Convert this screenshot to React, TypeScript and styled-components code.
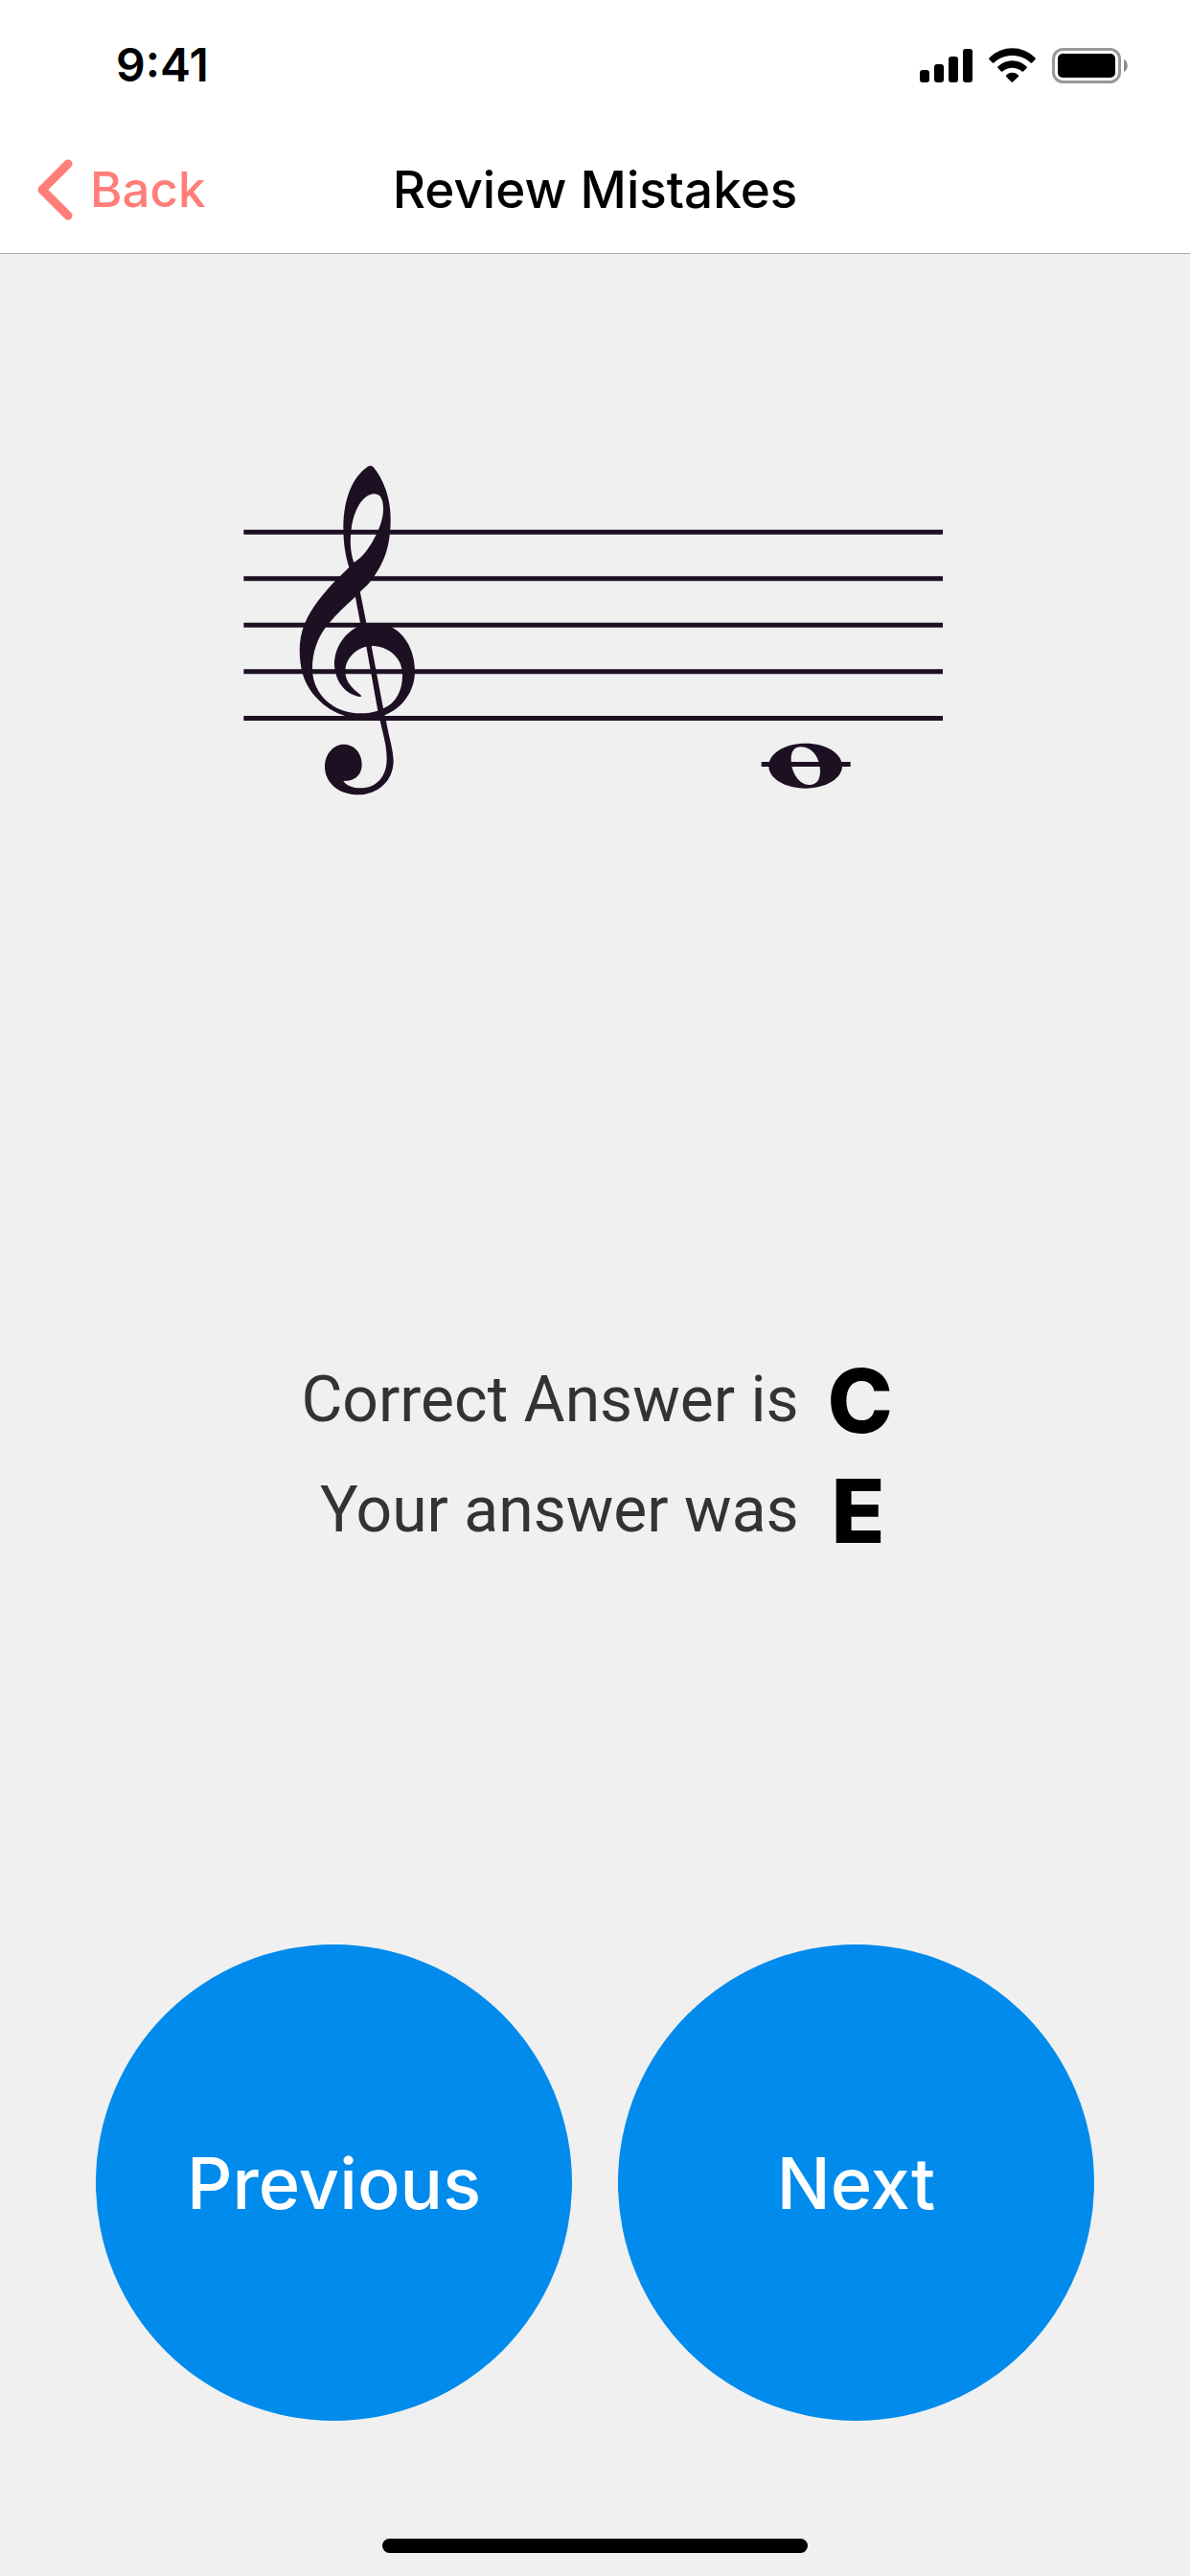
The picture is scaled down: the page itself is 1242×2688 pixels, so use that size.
import React from "react";
import styled, { createGlobalStyle } from "styled-components";

const GlobalStyle = createGlobalStyle`
  *, *::before, *::after { box-sizing: border-box; }
  body {
    margin: 0;
    background: #f0f0f0;
    color: #000;
    font-family: Inter, "Liberation Sans", sans-serif;
  }
`;

const Screen = styled.div`
  display: flex;
  flex-direction: column;
  min-height: 100vh;
`;

const Header = styled.header`
  background: #fff;
  border-bottom: 1px solid #a8a8a8;
`;

const StatusBar = styled.div`
  display: flex;
  align-items: center;
  justify-content: space-between;
  height: 132px;
  padding: 4px 64px 0 121px;
`;

const Clock = styled.time`
  font-size: 48px;
  font-weight: 600;
  line-height: 60px;
`;

const StatusIcons = styled.div`
  display: flex;
  align-items: center;
  gap: 17px;
`;

const NavBar = styled.nav`
  display: grid;
  grid-template-columns: 1fr auto 1fr;
  align-items: center;
  height: 132px;
  padding: 0 36px;
`;

const BackButton = styled.button`
  display: flex;
  align-items: center;
  gap: 16px;
  justify-self: start;
  padding: 0;
  border: 0;
  background: none;
  color: #ff7e79;
  font: inherit;
  font-size: 51px;
  font-weight: 500;
  line-height: 60px;
  cursor: pointer;
`;

const Title = styled.h1`
  margin: 0;
  font-size: 53px;
  font-weight: 500;
  line-height: 60px;
`;

const Content = styled.main`
  display: flex;
  flex: 1;
  flex-direction: column;
  align-items: center;
  padding-top: 221px;
`;

const Staff = styled.svg`
  display: block;
  width: 734px;
  max-width: 90%;
  height: auto;
  color: #1d1023;
`;

const Answers = styled.dl`
  display: grid;
  flex: 1;
  grid-template-columns: auto 64px;
  grid-auto-rows: 115px;
  align-content: center;
  align-items: center;
  column-gap: 30px;
  margin: 0;
  padding-top: 178px;
`;

const AnswerLabel = styled.dt`
  color: #333;
  font-family: Roboto, "Liberation Sans", sans-serif;
  font-size: 66px;
  line-height: 80px;
  text-align: right;
`;

const AnswerNote = styled.dd`
  margin: 0;
  font-size: 92px;
  font-weight: 800;
  line-height: 115px;
  text-align: center;
`;

const Controls = styled.div`
  display: grid;
  grid-template-columns: 1fr 1fr;
  gap: 48px;
  width: 100%;
  padding: 0 100px;
`;

const RoundButton = styled.button`
  aspect-ratio: 1;
  padding: 0;
  border: 0;
  border-radius: 50%;
  background: #018bec;
  color: #fff;
  font: inherit;
  font-size: 74px;
  font-weight: 500;
  line-height: 84px;
  cursor: pointer;
`;

const Footer = styled.footer`
  display: flex;
  align-items: flex-end;
  justify-content: center;
  height: 162px;
  padding-bottom: 24px;
`;

const HomeIndicator = styled.div`
  width: 444px;
  height: 15px;
  border-radius: 8px;
  background: #000;
`;

const SignalIcon = () => (
  <svg width="55" height="37" viewBox="0 0 55 37" aria-hidden="true">
    <rect x="0" y="23" width="10" height="13" rx="3" />
    <rect x="15" y="17" width="10" height="19" rx="3" />
    <rect x="30" y="9" width="10" height="27" rx="3" />
    <rect x="45" y="1" width="10" height="35" rx="3" />
  </svg>
);

const WifiIcon = () => (
  <svg width="49" height="37" viewBox="0 0 147 111" aria-hidden="true">
    <path d="M2 31 C42 -9 105 -9 145 31 Q148 34 145 37 L136 46 Q133 49 130 46 C98 17 49 17 17 46 Q14 49 11 46 L2 37 Q-1 34 2 31Z" />
    <path d="M29 58 C54 34 93 34 118 58 Q121 61 118 64 L109 73 Q106 76 103 73 C86 59 61 59 44 73 Q41 76 38 73 L29 64 Q26 61 29 58Z" />
    <path d="M55 85 C66 75 81 75 92 85 Q95 88 92 91 L76 106 Q73 109 70 106 L55 91 Q52 88 55 85Z" />
  </svg>
);

const BatteryIcon = () => (
  <svg width="80" height="37" viewBox="0 0 80 37" aria-hidden="true">
    <rect x="1.5" y="1.5" width="69" height="34" rx="10" fill="none" stroke="#999" strokeWidth="3" />
    <rect x="6" y="6" width="60" height="25" rx="5" />
    <path d="M75 12 C80 14 80 23 75 25Z" fill="#8c8c8c" />
  </svg>
);

const ChevronIcon = () => (
  <svg width="42" height="66" viewBox="0 0 42 66" aria-hidden="true">
    <path
      d="M35 6 L8 33 L35 60"
      fill="none"
      stroke="currentColor"
      strokeWidth="9"
      strokeLinecap="round"
      strokeLinejoin="round"
    />
  </svg>
);

const STAFF_LINES = [256, 401.5, 547, 692.5, 838.5];

const StaffDrawing = () => (
  <Staff viewBox="42 48 2202 1032" role="img" aria-label="Treble staff with a whole note on middle C">
    <g stroke="currentColor" strokeWidth="15">
      {STAFF_LINES.map((y) => (
        <line key={y} x1="43" x2="2232" y1={y} y2={y} />
      ))}
      <line x1="1664" x2="1943" y1="982.5" y2="982.5" />
    </g>
    <g fill="currentColor" fillRule="evenodd">
      {/* upper loop and the sweep down to the left */}
      <path
        d="M432 50 Q440 46 448 51 C480 88 504 150 503 220 C502 300 485 345 450 397 C438 415 423 429 407 443 L427 540
           L400 552 L427 540 L407 443 L392 459 C362 486 333 513 311 540 L299 555 C274 588 257 635 258 686
           C260 765 325 823 410 823 C430 823 447 820 463 815 C468 813 475 811 480 808
           C517 793 540 755 540 705 L538 684 C532 643 490 612 443 612 L427 614 C390 622 361 655 361 692
           C361 725 385 746 411 767 Q414 771 406 771 C362 765 328 722 327 670 C327 620 356 574 400 552
           C420 541 485 541 505 553 C550 575 579 630 579 690 C579 755 540 806 486 828 C462 837 437 838 410 838
           C395 838 375 837 360 831 C295 811 240 755 225 690 C215 640 214 590 235 540
           C257 490 292 448 330 408 L373 366 C362 330 355 295 355 240 C355 160 380 85 432 50Z
           M452 136 C415 137 387 188 380 248 C375 285 377 320 388 351 C418 333 440 300 458 263
           C470 238 480 212 480 182 C480 157 474 137 452 136Z"
      />
      {/* stem and the bulb at its foot */}
      <path
        d="M390 445 L407 440 L427 540 L443 612 L480 808 L489 846 C497 895 511 935 512 972
           C512 1035 462 1078 402 1078 C340 1078 297 1040 297 990 C297 950 325 920 356 920
           C390 920 413 948 413 983 C413 1015 392 1035 355 1035 C365 1050 385 1057 408 1057
           C460 1057 491 1020 491 965 C491 925 479 888 470 846 L463 815 L427 614 L408 540Z"
      />
      {/* whole note */}
      <path
        d="M1802 917 C1866 917 1917 948 1917 988 C1917 1027 1866 1058 1802 1058 C1738 1058 1687 1027 1687 988
           C1687 948 1738 917 1802 917Z
           M1788 928 C1768 928 1757 941 1757 966 C1757 1010 1783 1047 1814 1047
           C1837 1047 1848 1032 1848 1003 C1848 962 1822 928 1788 928Z"
      />
    </g>
  </Staff>
);

const answers = [
  { label: "Correct Answer is", note: "C" },
  { label: "Your answer was", note: "E" },
];

export default function App() {
  return (
    <Screen>
      <GlobalStyle />
      <Header>
        <StatusBar>
          <Clock>9:41</Clock>
          <StatusIcons>
            <SignalIcon />
            <WifiIcon />
            <BatteryIcon />
          </StatusIcons>
        </StatusBar>
        <NavBar>
          <BackButton type="button">
            <ChevronIcon />
            Back
          </BackButton>
          <Title>Review Mistakes</Title>
        </NavBar>
      </Header>
      <Content>
        <StaffDrawing />
        <Answers>
          {answers.map(({ label, note }) => (
            <React.Fragment key={label}>
              <AnswerLabel>{label}</AnswerLabel>
              <AnswerNote>{note}</AnswerNote>
            </React.Fragment>
          ))}
        </Answers>
        <Controls>
          <RoundButton type="button">Previous</RoundButton>
          <RoundButton type="button">Next</RoundButton>
        </Controls>
      </Content>
      <Footer>
        <HomeIndicator />
      </Footer>
    </Screen>
  );
}
